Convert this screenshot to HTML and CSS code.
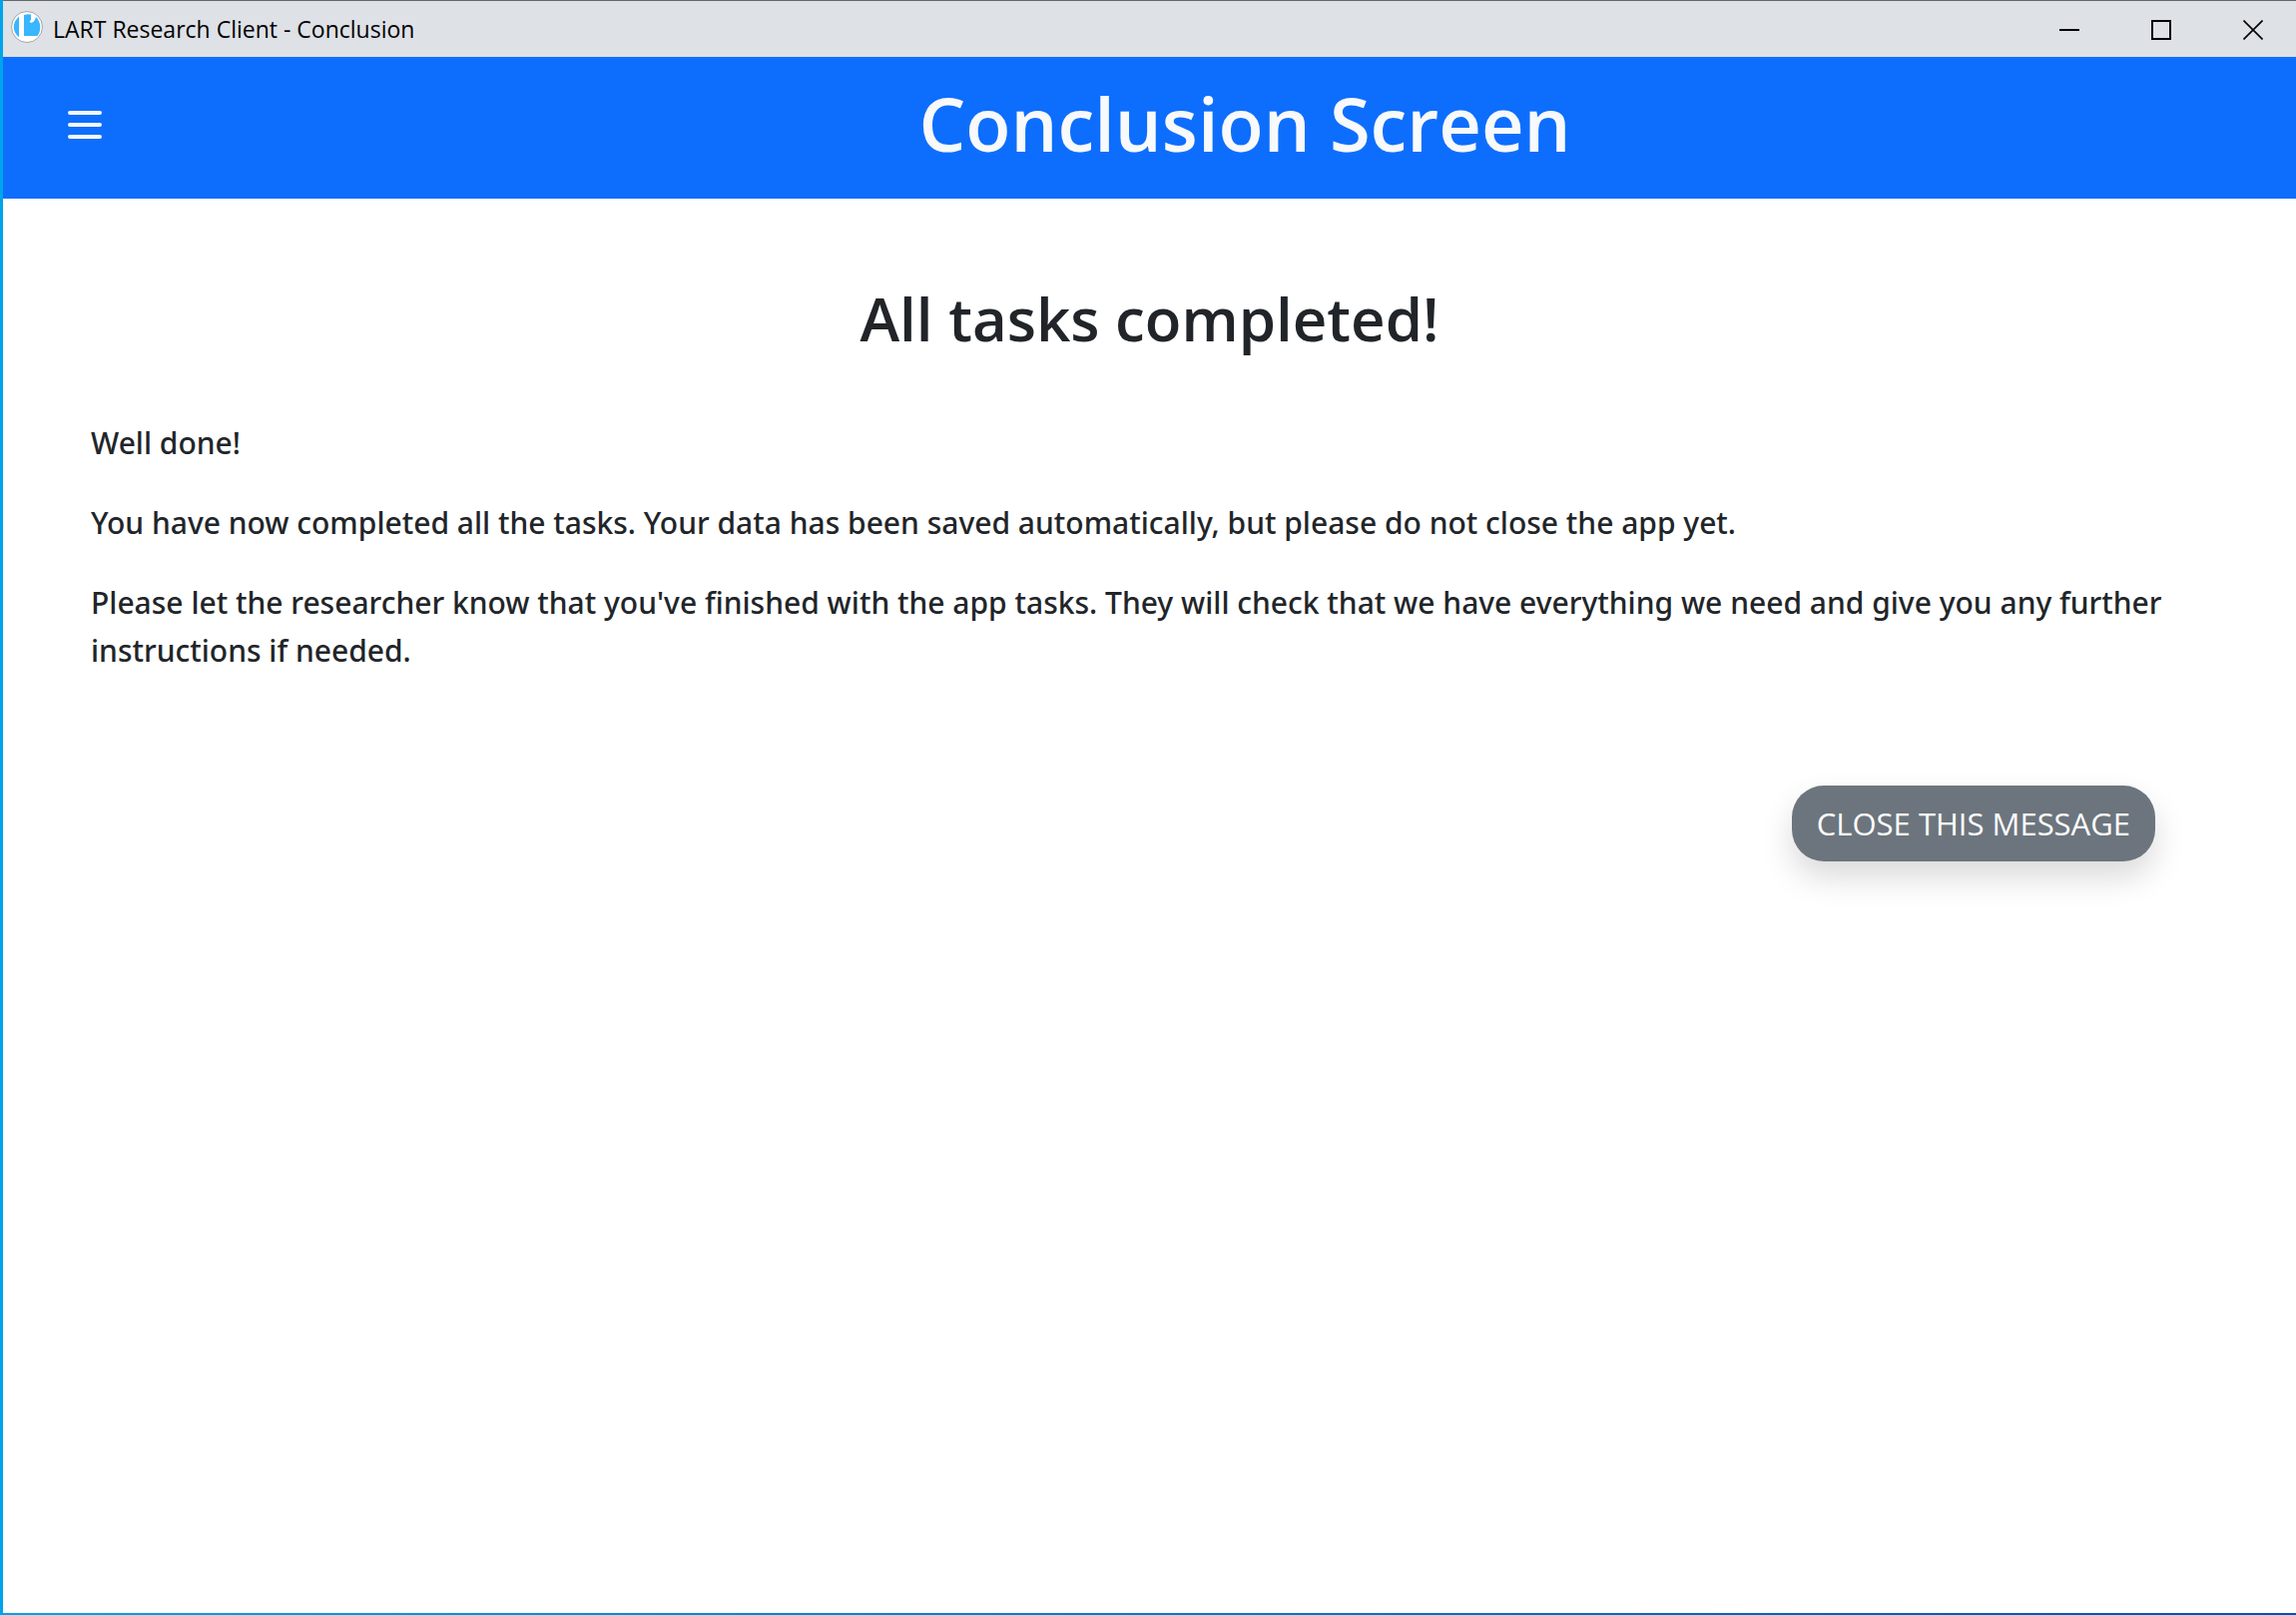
FILE: index.html
```
<!DOCTYPE html>
<html lang="en">
<head>
<meta charset="utf-8">
<title>LART Research Client - Conclusion</title>
<link rel="stylesheet" href="styles.css">
</head>
<body>
<div class="window">
  <div class="titlebar">
    <svg class="app-icon" viewBox="0 0 32 32" aria-hidden="true">
      <circle cx="16" cy="16" r="15.5" fill="#fff" stroke="#a3a5a8"/>
      <path d="M8 5.5v21C1 20 1 12 8 5.500Z" fill="#38b6ff"/>
      <path d="M13 4Q16 3 20 3.500V9l-1.500 1.500 1.500 1.500c3-.5 4-3 5-6 5.500 5 5.500 14 1.500 19H13Z" fill="#38b6ff"/>
    </svg>
    <span class="app-name">LART Research Client - Conclusion</span>
    <div class="controls">
      <button class="control" type="button" aria-label="Minimize"><svg viewBox="0 0 20 20"><path d="M0 10h20"/></svg></button>
      <button class="control" type="button" aria-label="Maximize"><svg viewBox="0 0 20 20"><path d="M1 1h18v18H1z"/></svg></button>
      <button class="control" type="button" aria-label="Close"><svg viewBox="0 0 20 20"><path d="M.5.5l19 19M19.500.5l-19 19" stroke-width="1.600"/></svg></button>
    </div>
  </div>
  <header class="header">
    <button class="menu" type="button" aria-label="Menu">
      <svg viewBox="0 0 34 28"><path d="M2 2h30M2 14h30M2 26h30"/></svg>
    </button>
    <h1>Conclusion Screen</h1>
  </header>
  <main class="content">
    <h2>All tasks completed!</h2>
    <p>Well done!</p>
    <p>You have now completed all the tasks. Your data has been saved automatically, but please do not close the app yet.</p>
    <p>Please let the researcher know that you've finished with the app tasks. They will check that we have everything we need and give you any further instructions if needed.</p>
    <div class="actions"><button class="close-message" type="button">CLOSE THIS MESSAGE</button></div>
  </main>
</div>
</body>
</html>
```
FILE: styles.css
```
* { box-sizing: border-box; }

body {
  margin: 0;
  font-family: "Open Sans", "Noto Sans", sans-serif;
  color: #212529;
}

button {
  margin: 0;
  border: 0;
  background: none;
  font: inherit;
}

svg { display: block; }

/* The gradient shows through the padding as the window frame */
.window {
  display: flex;
  flex-direction: column;
  min-height: 100vh;
  padding: 0 0 2px 3px;
  background: linear-gradient(90deg, #00a4ea, #0052ba);
}

.titlebar {
  display: flex;
  align-items: center;
  height: 57px;
  padding-left: 8px;
  border-top: 1px solid #66686b;
  background: #dee1e6;
  color: #000;
}

.app-icon {
  width: 32px;
  height: 32px;
  margin-bottom: 4px;
}

.app-name {
  flex: 1;
  padding-left: 10px;
  font-size: 23px;
  line-height: 32px;
}

.controls { display: flex; }

.control {
  display: grid;
  place-items: center;
  width: 92px;
  height: 56px;
  padding: 2px 0 0 6px;
}

.control svg {
  width: 20px;
  height: 20px;
  fill: none;
  stroke: #000;
  stroke-width: 2;
}

.header {
  display: flex;
  align-items: center;
  height: 142px;
  background: #0d6efd;
  color: #f8f9fa;
}

.menu {
  width: 191px;
  padding: 0 0 6px 65px;
}

.menu svg {
  width: 34px;
  height: 28px;
  fill: none;
  stroke: #f8f9fa;
  stroke-width: 4;
  stroke-linecap: round;
}

h1 {
  flex: 1;
  margin: 0;
  padding-bottom: 8px;
  font-size: 74px;
  font-weight: 600;
  line-height: 96px;
  text-align: center;
}

.content {
  flex: 1;
  padding: 80px 88px 0;
  background: #fff;
}

h2 {
  margin: 0 0 61px;
  font-size: 60px;
  font-weight: 600;
  line-height: 80px;
  text-align: center;
}

p {
  margin: 0 0 32px;
  font-family: "Noto Sans", sans-serif;
  font-size: 30px;
  font-weight: 500;
  line-height: 48px;
}

.actions {
  display: flex;
  justify-content: flex-end;
  padding: 79px 53px 0 0;
}

.close-message {
  height: 76px;
  padding: 0 25px;
  border-radius: 32px;
  background: #6c757d;
  box-shadow: 0 16px 32px rgba(0, 0, 0, 0.15);
  color: #fff;
  font-size: 31px;
  line-height: 48px;
}
```
